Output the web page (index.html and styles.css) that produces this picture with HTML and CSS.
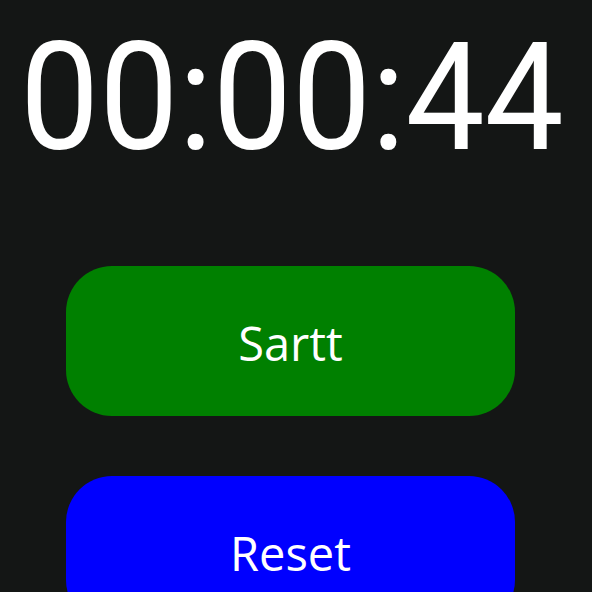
FILE: index.html
```html
<!DOCTYPE html>
<html>
<head>
<meta charset="utf-8">
<link rel="stylesheet" href="styles.css">
</head>
<body>
<div class="app">
  <div class="timer">00:00:44</div>
  <div class="actions">
    <button class="btn btn-start">Sartt</button>
    <button class="btn btn-reset">Reset</button>
  </div>
</div>
</body>
</html>
```
FILE: styles.css
```css
html, body {
  margin: 0;
  padding: 0;
  background: #141615;
  overflow: hidden;
}
.app {
  width: 592px;
  height: 592px;
  display: flex;
  flex-direction: column;
  overflow: hidden;
}
.timer {
  font-family: Roboto, "Open Sans", sans-serif;
  font-size: 141px;
  line-height: 141px;
  height: 141px;
  color: #ffffff;
  text-align: center;
  margin-top: 27px;
  padding-right: 8px;
  white-space: nowrap;
  transform: scaleY(1.07);
}
.actions {
  display: flex;
  flex-direction: column;
  gap: 60px;
  padding: 98px 0 0 66px;
}
.btn {
  width: 449px;
  height: 150px;
  flex: none;
  border: none;
  border-radius: 46px;
  color: #ffffff;
  font-family: "Open Sans", "Noto Sans", sans-serif;
  font-size: 47px;
  display: flex;
  align-items: center;
  justify-content: center;
  padding: 4px 0 0;
}
.btn-start {
  background: #008000;
}
.btn-reset {
  background: #0000ff;
}
```
